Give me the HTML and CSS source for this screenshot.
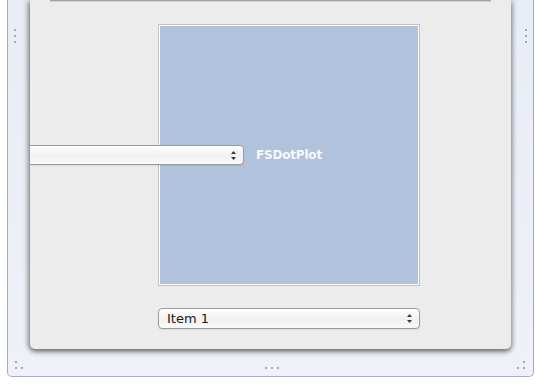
FILE: index.html
```html
<!DOCTYPE html>
<html lang="en">
<head>
  <meta charset="UTF-8">
  <meta name="viewport" content="width=device-width, initial-scale=1.0">
  <title>FSDotPlot</title>
  <link rel="stylesheet" href="styles.css">
</head>
<body>
  <div class="frame">
    <div class="gutter gutter-left">
      <svg class="grip" width="4" height="16" viewBox="0 0 4 16"><circle cx="2" cy="2" r="1"/><circle cx="2" cy="8" r="1"/><circle cx="2" cy="14" r="1"/></svg>
    </div>

    <div class="panel">
      <div class="top-box"></div>

      <div class="plot-row">
        <div class="plot-view">
          <span>FSDotPlot</span>
        </div>
        <div class="popup popup-side">
          <span class="popup-label"></span>
          <svg class="arrows" width="5" height="9" viewBox="0 0 5 9"><path d="M2.5 0 L5 3 L0 3 Z M0 6 L5 6 L2.5 9 Z"/></svg>
        </div>
      </div>

      <div class="popup popup-bottom">
        <span class="popup-label">Item 1</span>
        <svg class="arrows" width="5" height="9" viewBox="0 0 5 9"><path d="M2.5 0 L5 3 L0 3 Z M0 6 L5 6 L2.5 9 Z"/></svg>
      </div>
    </div>

    <div class="gutter gutter-right">
      <svg class="grip" width="4" height="16" viewBox="0 0 4 16"><circle cx="2" cy="2" r="1"/><circle cx="2" cy="8" r="1"/><circle cx="2" cy="14" r="1"/></svg>
    </div>

    <div class="bottom-bar">
      <svg class="grip corner-left" width="10" height="10" viewBox="0 0 10 10"><circle cx="2" cy="2" r="1"/><circle cx="2" cy="8" r="1"/><circle cx="8" cy="8" r="1"/></svg>
      <svg class="grip" width="16" height="4" viewBox="0 0 16 4"><circle cx="2" cy="2" r="1"/><circle cx="8" cy="2" r="1"/><circle cx="14" cy="2" r="1"/></svg>
      <svg class="grip corner-right" width="10" height="10" viewBox="0 0 10 10"><circle cx="8" cy="2" r="1"/><circle cx="2" cy="8" r="1"/><circle cx="8" cy="8" r="1"/></svg>
    </div>
  </div>
</body>
</html>
```

FILE: styles.css
```css
body {
  margin: 0;
  padding: 0;
  background: #fff;
  font-family: "DejaVu Sans", "Liberation Sans", sans-serif;
}

.frame {
  margin-left: 7px;
  width: 525px;
  height: 376px;
  display: grid;
  grid-template-columns: 22px 481px 22px;
  grid-template-rows: 349px 27px;
  border: 1px solid #a4adbf;
  border-top: none;
  border-radius: 0 0 5px 5px;
  background: linear-gradient(to bottom, #e8ecf4, #eef1f8);
}

.grip {
  fill: #8c8f96;
  display: block;
}

.gutter {
  padding-top: 28px;
}

.gutter-left {
  padding-left: 5px;
}

.gutter-right {
  padding-left: 13px;
}

.panel {
  position: relative;
  overflow: hidden;
  background: #ececec;
  border-radius: 0 0 5px 5px;
  box-shadow: -3px 0 5px rgba(0, 0, 0, 0.22), 3px 0 4px rgba(0, 0, 0, 0.12), 0 3px 5px rgba(0, 0, 0, 0.45);
}

.top-box {
  margin: 0 20px;
  height: 1px;
  background: #a2a2a2;
  border-bottom: 1px solid #d2d2d2;
}

.plot-row {
  position: relative;
  margin-top: 22px;
  margin-left: 128px;
}

.plot-view {
  width: 258px;
  height: 258px;
  border: 1px solid #c2c2c2;
  outline: 1px solid #fff;
  outline-offset: -2px;
  padding: 1px;
  background: #b0c2dc;
  background-clip: content-box;
  display: flex;
  align-items: center;
  justify-content: center;
}

.plot-view span {
  color: #f7f9fc;
  font-weight: bold;
  font-size: 12px;
  letter-spacing: -0.2px;
}

.popup {
  box-sizing: border-box;
  display: flex;
  align-items: center;
  justify-content: space-between;
  border: 1px solid #9b9b9b;
  border-radius: 4px;
  background: linear-gradient(to bottom, #ffffff, #f1f1f1 55%, #fafafa);
  box-shadow: 0 1px 1px rgba(0, 0, 0, 0.08);
  padding: 0 7px 0 8px;
}

.popup-side {
  position: absolute;
  top: 121px;
  left: -148px;
  width: 234px;
  height: 20px;
}

.popup-bottom {
  margin-top: 22px;
  margin-left: 128px;
  width: 262px;
  height: 21px;
}

.popup-label {
  font-size: 13px;
  color: #1a1a1a;
}

.arrows {
  fill: #3a3a3a;
  display: block;
}

.bottom-bar {
  grid-column: 1 / 4;
  display: flex;
  align-items: flex-start;
  justify-content: space-between;
  padding: 11px 7px 0 6px;
}

.bottom-bar .grip:nth-child(2) {
  margin-top: 6px;
  margin-left: 3px;
}
```
